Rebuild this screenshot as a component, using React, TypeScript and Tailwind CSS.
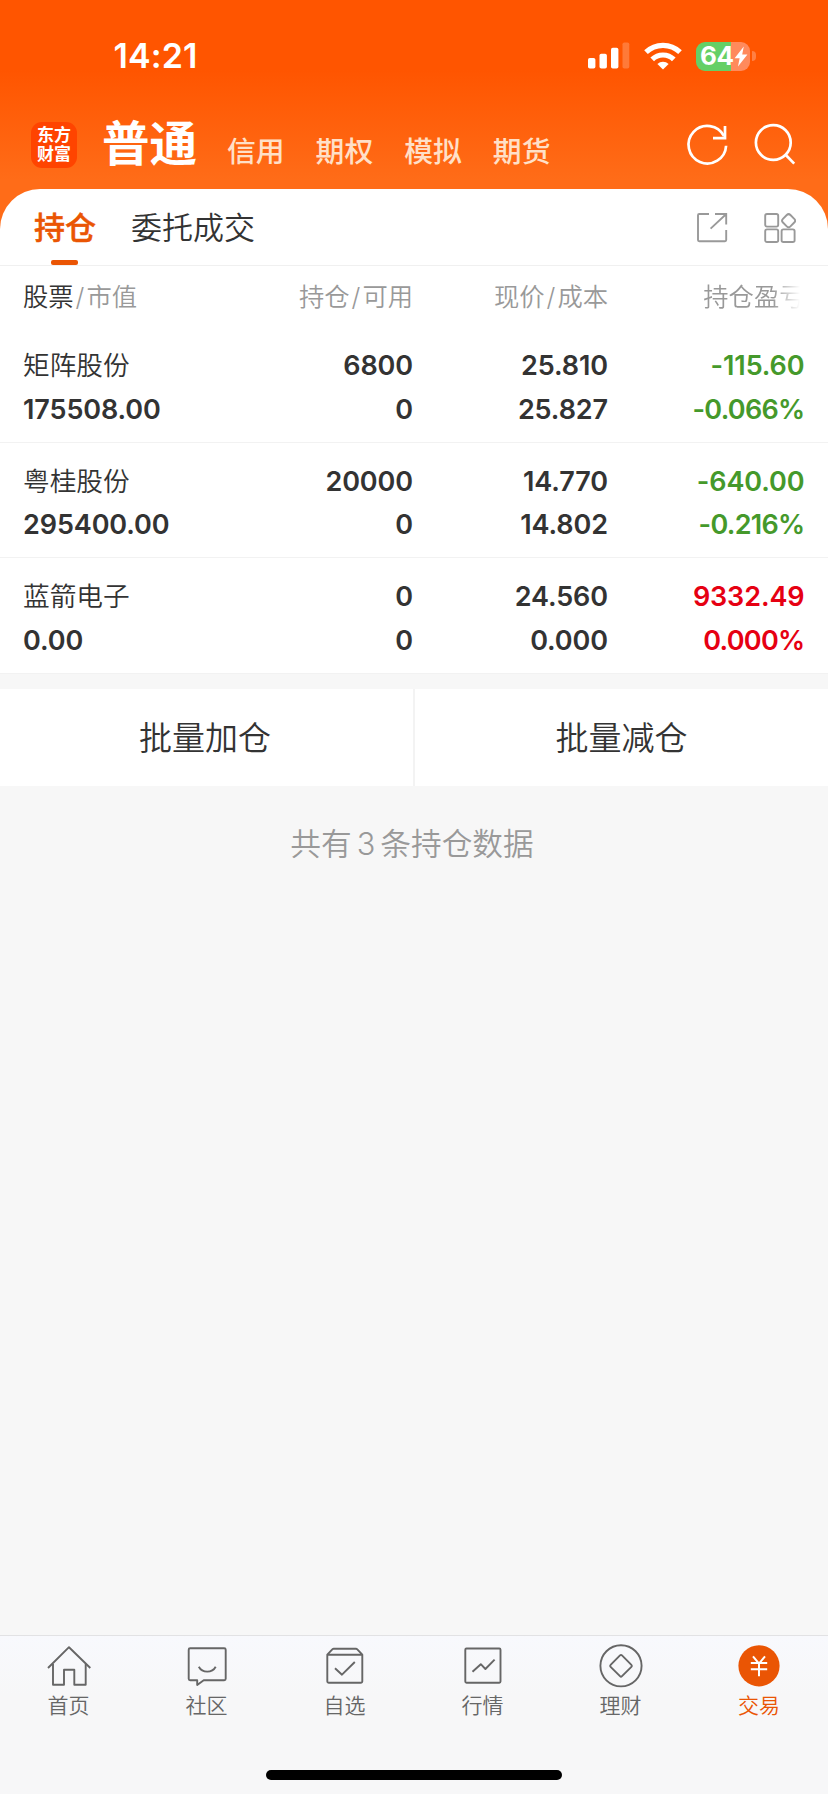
import type { ReactNode } from "react";

type Tone = "down" | "up";

interface Holding {
  name: string;
  value: string;
  shares: string;
  available: string;
  price: string;
  cost: string;
  profit: string;
  rate: string;
  tone: Tone;
}

const holdings: Holding[] = [
  { name: "矩阵股份", value: "175508.00", shares: "6800", available: "0", price: "25.810", cost: "25.827", profit: "-115.60", rate: "-0.066%", tone: "down" },
  { name: "粤桂股份", value: "295400.00", shares: "20000", available: "0", price: "14.770", cost: "14.802", profit: "-640.00", rate: "-0.216%", tone: "down" },
  { name: "蓝箭电子", value: "0.00", shares: "0", available: "0", price: "24.560", cost: "0.000", profit: "9332.49", rate: "0.000%", tone: "up" },
];

const toneClass: Record<Tone, string> = {
  down: "text-[#45992b]",
  up: "text-[#e60012]",
};

const accounts = ["信用", "期权", "模拟", "期货"];

function StatusBar() {
  return (
    <div className="flex h-28 items-center justify-between pl-[113.5px] pr-[72px]">
      <span className="text-[34px] leading-none font-[560] tracking-[0.1px] text-white">14:21</span>
      <div className="flex items-center">
        <svg className="h-[30px] w-[43px]" viewBox="0 0 43 30" fill="#fff">
          <rect x="1" y="17" width="7.4" height="10.5" rx="1.8" />
          <rect x="12.5" y="12.8" width="7.4" height="14.7" rx="1.8" />
          <rect x="24" y="6.8" width="7.4" height="20.7" rx="1.8" />
          <rect x="35.5" y="1.5" width="6.8" height="26" rx="1.8" opacity="0.22" />
        </svg>
        <svg className="ml-[14px] h-[30px] w-[38px]" viewBox="0 0 38 30" fill="none" stroke="#fff" strokeWidth="5.2">
          <path d="M2 11.2a24.5 24.5 0 0 1 34 0" />
          <path d="M8.2 18.4a15.4 15.4 0 0 1 21.6 0" />
          <path d="M19 28.6l-5.6-5.7a8.2 8.2 0 0 1 11.2 0z" fill="#fff" stroke="none" />
        </svg>
        <div className="ml-[14px] flex h-[29px] w-[54px] items-center rounded-[9px] bg-[linear-gradient(to_right,#65cf66_0_35px,#ff8a5c_35px)] pl-[4px]">
          <span className="w-[34px] text-[26px] leading-none font-bold tracking-[-0.5px] text-white">64</span>
          <svg className="h-[21px] w-[14px]" viewBox="0 0 14 21" fill="#fff">
            <path d="M9.8 0.5L0.6 12.2h5L4 20.5 13.4 8.6H8.2z" />
          </svg>
        </div>
        <div className="ml-[2px] h-[10px] w-[4px] rounded-r-full bg-[#ff8044]" />
      </div>
    </div>
  );
}

function AccountBar() {
  return (
    <div className="flex h-[77px] pl-[31px] pr-[29px]">
      <div className="mt-[9.5px] flex size-[46px] flex-col items-center justify-center rounded-[11px] bg-[#ff4400] text-[17px] leading-[19px] font-bold text-white">
        <span>东方</span>
        <span>财富</span>
      </div>
      <h1 className="ml-[25px] mt-[2px] text-[47.5px] leading-[60px] font-bold text-white">普通</h1>
      <nav className="ml-[30px] mt-[20px] flex gap-[31px]">
        {accounts.map((account) => (
          <span key={account} className="text-[28.8px] leading-[40px] font-medium text-[#ffe0c8]">
            {account}
          </span>
        ))}
      </nav>
      <div className="ml-auto mt-[9px] flex gap-[20px]">
        <svg className="size-[48px]" viewBox="0 0 48 48" fill="none" stroke="#fff" strokeWidth="2.7">
          <path d="M41.1 15.2A18.8 18.8 0 1 0 43.1 24.7" />
          <path d="M42 5v12.2H30" />
        </svg>
        <svg className="size-[48px]" viewBox="0 0 48 48" fill="none" stroke="#fff" strokeWidth="2.7">
          <circle cx="22.3" cy="21.5" r="17.4" />
          <path d="M34.6 33.8l8.6 8.8" />
        </svg>
      </div>
    </div>
  );
}

function SectionTabs() {
  return (
    <div className="flex h-[77px] border-b border-[#f0f0f0] pl-[34px] pr-[32px] text-[31px] leading-[77px]">
      <div className="relative font-medium text-[#ea5504] [-webkit-text-stroke:0.5px_#ea5504]">
        持仓
        <span className="absolute bottom-0 left-[17px] h-[5px] w-[27px] rounded-[2px] bg-[#ea5504]" />
      </div>
      <div className="ml-[35px] font-[350] text-[#333]">委托成交</div>
      <div className="ml-auto mt-[22px] flex gap-[36px]">
        <svg className="size-[32px]" viewBox="0 0 32 32" fill="none" stroke="#999" strokeWidth="1.9">
          <path d="M13 3H3.2a1.2 1.2 0 0 0-1.2 1.2V29a1.2 1.2 0 0 0 1.2 1.2H29a1.2 1.2 0 0 0 1.2-1.2V19" />
          <path d="M19 3h11.2v10.4M30 3.2L14.6 17.6" />
        </svg>
        <svg className="size-[32px]" viewBox="0 0 32 32" fill="none" stroke="#999" strokeWidth="1.9">
          <rect x="1.2" y="3" width="13" height="12.6" rx="1.8" />
          <rect x="1.2" y="18.4" width="13" height="12.6" rx="1.8" />
          <rect x="17.6" y="18.4" width="13" height="12.6" rx="1.8" />
          <rect x="19.3" y="4.4" width="10.6" height="10.6" rx="2.6" transform="rotate(45 24.6 9.7)" />
        </svg>
      </div>
    </div>
  );
}

const gridClass = "grid grid-cols-[201px_189px_195px_196.5px] pl-[23px]";

function ColumnHeader() {
  return (
    <div className={`${gridClass} h-[61px] text-[25.3px] leading-[62px] font-[350] text-[#999]`}>
      <div>
        <span className="text-[#333]">股票</span>
        <span className="mx-[2px]">/</span>市值
      </div>
      <div className="text-right">
        持仓<span className="mx-[2px]">/</span>可用
      </div>
      <div className="text-right">
        现价<span className="mx-[2px]">/</span>成本
      </div>
      <div className="text-right [mask-image:linear-gradient(to_right,#000_165px,transparent_192px)]">持仓盈亏</div>
    </div>
  );
}

function HoldingRow({ item }: { item: Holding }) {
  return (
    <div className={`${gridClass} h-[115.5px] border-b border-[#f2f2f2] pt-[17px] text-[27px] leading-[43.5px] font-[560] tracking-[-0.1px] text-[#333]`}>
      <div>
        <div className="text-[26.7px] font-[350] tracking-normal">{item.name}</div>
        <div>{item.value}</div>
      </div>
      <div className="text-right">
        <div>{item.shares}</div>
        <div>{item.available}</div>
      </div>
      <div className="text-right">
        <div>{item.price}</div>
        <div>{item.cost}</div>
      </div>
      <div className={`text-right ${toneClass[item.tone]}`}>
        <div>{item.profit}</div>
        <div className="tracking-[-0.7px]">{item.rate}</div>
      </div>
    </div>
  );
}

const navItems: { label: string; icon: ReactNode }[] = [
  {
    label: "首页",
    icon: (
      <>
        <path d="M3 26L24 5.2 45.3 26" />
        <path d="M8 22v20.7h11v-15h10.3v15h11.4V22" />
      </>
    ),
  },
  {
    label: "社区",
    icon: (
      <>
        <path d="M7.2 6.3h34a1.5 1.5 0 0 1 1.5 1.5v28.9a1.5 1.5 0 0 1-1.5 1.5H20.7L14.2 43v-4.8h-7a1.5 1.5 0 0 1-1.5-1.5V7.8a1.5 1.5 0 0 1 1.5-1.5z" />
        <path d="M15.8 24.7c3.6 6.6 13.3 6.6 16.9 0" />
      </>
    ),
  },
  {
    label: "自选",
    icon: (
      <>
        <path d="M6.3 12.7l5-5.4q.6-.6 1.4-.6h22.2q.8 0 1.4.6l5 5.4v26.5a1.5 1.5 0 0 1-1.5 1.5h-32a1.5 1.5 0 0 1-1.5-1.5zM6.3 12.7h35" />
        <path d="M14 26.3l7 6.4L33.8 20" />
      </>
    ),
  },
  {
    label: "行情",
    icon: (
      <>
        <rect x="6.3" y="6.5" width="35.2" height="34.3" rx="1.2" />
        <path d="M13.5 29.7l8.3-7.5 4.6 4.8 9.2-9.4" />
      </>
    ),
  },
  {
    label: "理财",
    icon: (
      <>
        <circle cx="24" cy="23.8" r="20.6" />
        <path d="M23 13.4L13.6 22.8q-1 1 0 2L23 34.2q1 1 2 0l9.4-9.4q1-1 0-2L25 13.4q-1-1-2 0z" />
      </>
    ),
  },
];

function BottomNav() {
  return (
    <footer className="h-[159px] border-t border-[#e2e2e4] bg-[linear-gradient(#f8f9fd,#f7f7f8_60px)]">
      <div className="grid h-[134px] grid-cols-6 pt-[6px] text-[21px] leading-[32px] font-[350] text-[#666]">
        {navItems.map((item) => (
          <div key={item.label} className="flex flex-col items-center">
            <svg className="size-[48px]" viewBox="0 0 48 48" fill="none" stroke="#666" strokeWidth="1.9" strokeLinejoin="round">
              {item.icon}
            </svg>
            <span className="pr-[1px]">{item.label}</span>
          </div>
        ))}
        <div className="flex flex-col items-center text-[#ea5504]">
          <svg className="size-[48px]" viewBox="0 0 48 48" fill="none" stroke="#fff" strokeWidth="2">
            <circle cx="24" cy="23.8" r="20.6" fill="#ea5504" stroke="none" />
            <path d="M18 14.3l6 7.4 6-7.4M24 21.7v12.6M15.8 21h16.4M15.8 27.3h16.4" />
          </svg>
          <span>交易</span>
        </div>
      </div>
      <div className="mx-auto h-[9.5px] w-[296px] rounded-full bg-black" />
    </footer>
  );
}

export default function App() {
  return (
    <div className="flex h-[1794px] w-[828px] flex-col overflow-hidden bg-[#f7f7f7] font-['Inter','Noto_Sans_CJK_SC',sans-serif]">
      <header className="h-[229px] shrink-0 bg-[linear-gradient(#ff5500_70px,#ff6c18_180px)]">
        <StatusBar />
        <AccountBar />
      </header>
      <main className="-mt-[40px] flex-1">
        <section className="rounded-t-[40px] bg-white">
          <SectionTabs />
          <ColumnHeader />
          {holdings.map((item) => (
            <HoldingRow key={item.name} item={item} />
          ))}
        </section>
        <div className="mt-[15.5px] grid h-[97px] grid-cols-2 text-center text-[33px] leading-[96px] font-[350] text-[#333]">
          <button className="border-r border-[#f3f3f3] bg-white pr-[3px] pt-[1px]">批量加仓</button>
          <button className="border-l border-[#f3f3f3] bg-white pt-[1px]">批量减仓</button>
        </div>
        <p className="mt-[37px] pr-[4px] text-center text-[30.7px] leading-[42px] font-[350] text-[#999]">
          共有<span className="mx-[5px]">3</span>条持仓数据
        </p>
      </main>
      <BottomNav />
    </div>
  );
}
